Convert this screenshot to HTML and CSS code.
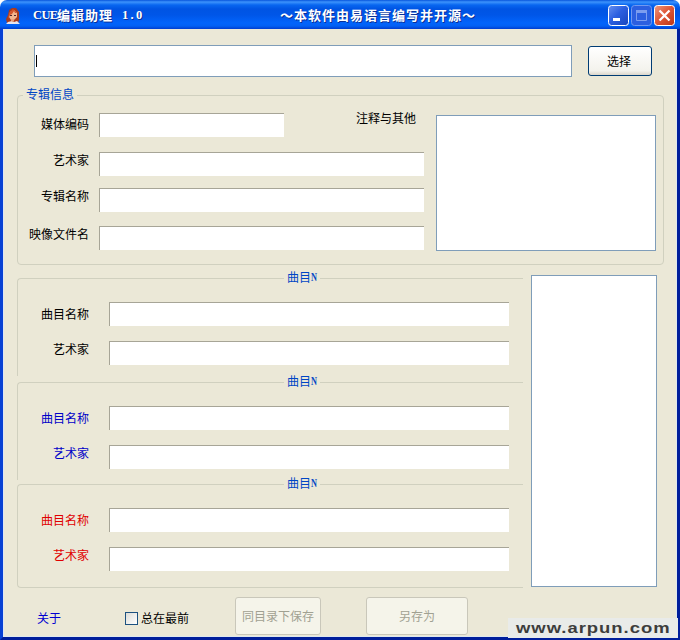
FILE: index.html
```html
<!DOCTYPE html>
<html lang="zh-CN">
<head>
<meta charset="utf-8">
<title>CUE编辑助理 1.0</title>
<link rel="stylesheet" href="styles.css">
</head>
<body>
<div class="window">
  <header class="titlebar">
    <svg class="app-icon" width="16" height="16" viewBox="0 0 16 16">
      <path d="M4 2L7 0h4l3 4v8l-1 3H2L1 11l2-4z" fill="#a83b1d"/>
      <path d="M5 4l4-2 3 3v4l-3 3H6L4 9z" fill="#f2b58d"/>
      <path d="M4 5l4-4 4 4-2 0-1-2-2 3-2 1-2 4z" fill="#d5542b"/>
      <path d="M5 7h2v1H5zM9 7h2v1H9z" fill="#55252a"/>
      <path d="M1 16l2-2 4-1 2 1 3-1 3 3z" fill="#e9e4ed"/>
      <path d="M6 11h3v2l-1 1-2-1z" fill="#e8a079"/>
    </svg>
    <h1 class="title"><span class="latin">CUE</span><span>编辑助理</span><span class="latin version">1.0</span></h1>
    <p class="slogan">～本软件由易语言编写并开源～</p>
    <div class="controls">
      <svg class="control" width="21" height="21" viewBox="0 0 21 21">
        <defs>
          <linearGradient id="blue" x1="0" y1="0" x2="1" y2="1"><stop offset="0" stop-color="#6690f0"/><stop offset=".45" stop-color="#2c5fe0"/><stop offset="1" stop-color="#1745bd"/></linearGradient>
          <linearGradient id="red" x1="0" y1="0" x2="1" y2="1"><stop offset="0" stop-color="#ee9a80"/><stop offset=".45" stop-color="#e0593a"/><stop offset="1" stop-color="#bd3515"/></linearGradient>
        </defs>
        <rect x=".5" y=".5" width="20" height="20" rx="3" fill="url(#blue)" stroke="#fff"/>
        <path d="M5 13h7v3H5z" fill="#fff"/>
      </svg>
      <svg class="control" width="21" height="21" viewBox="0 0 21 21">
        <rect x=".5" y=".5" width="20" height="20" rx="3" fill="#2c5fe0" stroke="#7198f0"/>
        <path d="M5.500 6.500h10v9h-10z" fill="none" stroke="#7c9def"/>
        <path d="M5 5h11v3H5z" fill="#7c9def"/>
      </svg>
      <svg class="control" width="21" height="21" viewBox="0 0 21 21">
        <rect x=".5" y=".5" width="20" height="20" rx="3" fill="url(#red)" stroke="#fff"/>
        <path d="M5.500 5.500l10 10M15.500 5.500l-10 10" stroke="#fff" stroke-width="2.300"/>
      </svg>
    </div>
  </header>

  <main class="client">
    <div class="open-row">
      <div class="path-box"><span class="caret"></span></div>
      <button class="button choose">选择</button>
    </div>

    <section class="group album">
      <div class="legend"><span>专辑信息</span></div>
      <div class="album-body">
        <div class="fields">
          <div class="field code"><label>媒体编码</label><div class="input"></div></div>
          <div class="field artist"><label>艺术家</label><div class="input"></div></div>
          <div class="field name"><label>专辑名称</label><div class="input"></div></div>
          <div class="field file"><label>映像文件名</label><div class="input"></div></div>
        </div>
        <div class="note-label">注释与其他</div>
        <div class="notes"></div>
      </div>
    </section>

    <div class="lower">
      <div class="tracks">
        <section class="group track first">
          <div class="legend"><span>曲目<b>N</b></span></div>
          <div class="field"><label>曲目名称</label><div class="input"></div></div>
          <div class="field"><label>艺术家</label><div class="input"></div></div>
        </section>
        <section class="group track second">
          <div class="legend"><span>曲目<b>N</b></span></div>
          <div class="field"><label>曲目名称</label><div class="input"></div></div>
          <div class="field"><label>艺术家</label><div class="input"></div></div>
        </section>
        <section class="group track third">
          <div class="legend"><span>曲目<b>N</b></span></div>
          <div class="field"><label>曲目名称</label><div class="input"></div></div>
          <div class="field"><label>艺术家</label><div class="input"></div></div>
        </section>
      </div>
      <div class="list"></div>
    </div>

    <footer class="footer">
      <a class="about">关于</a>
      <label class="on-top"><span class="check"></span>总在最前</label>
      <button class="button save" disabled>同目录下保存</button>
      <button class="button save-as" disabled>另存为</button>
    </footer>
  </main>
  <div class="watermark"><span>www.arpun.com</span></div>
</div>
</body>
</html>
```
FILE: styles.css
```css
* { box-sizing: border-box; }

body {
  margin: 0;
  background: #fff;
  font: 12px/16px "Noto Sans CJK SC", sans-serif;
  color: #000;
}

.window {
  position: relative;
  display: flex;
  flex-direction: column;
  width: 680px;
  height: 640px;
  overflow: hidden;
}

.titlebar {
  display: flex;
  align-items: center;
  height: 29px;
  padding: 2px 5px 0 5px;
  border-radius: 7px 7px 0 0;
  background: linear-gradient(#0755dc 0, #3c93fc 2px, #0866f0 5px, #0054e3 9px, #0056e8 15px, #0264fb 23px, #0260f4 26px, #003dcf 29px);
  color: #fff;
  text-shadow: 1px 1px 0 #0a2f96;
}

.app-icon { flex: none; }

.title, .slogan {
  display: flex;
  margin: 0 0 2px;
  font-size: 13px;
  font-weight: bold;
  letter-spacing: 1px;
  line-height: 20px;
  white-space: nowrap;
}

.title { width: 247px; margin-left: 12px; }
.latin { width: 24px; font-family: "Liberation Serif", serif; font-size: 12.5px; letter-spacing: -0.6px; }
.version { margin-left: 9px; letter-spacing: 2.3px; }
.slogan { flex: 1; }
.controls { display: flex; gap: 2px; }
.control { display: block; }

.client {
  flex: 1;
  border: solid #001e9b;
  border-width: 0 3px 3px;
  border-left-color: #0841d4;
  background: #ebe8d7;
  box-shadow: inset 1px 0 #dfe6f4, inset -1px -1px #dfe8ee;
}

.open-row {
  display: flex;
  align-items: center;
  gap: 16px;
  padding: 16px 0 0 31px;
}

.path-box {
  display: flex;
  align-items: center;
  width: 538px;
  height: 32px;
  padding-left: 1px;
  border: 1px solid #7f9db9;
  background: #fff;
}

.caret { width: 1px; height: 12px; background: #000; }

.button {
  padding: 0;
  border: 1px solid #003c74;
  border-radius: 3px;
  background: linear-gradient(#fff, #f3f2ec 85%, #dcd6cb);
  font: inherit;
  color: #000;
}

.choose { width: 64px; height: 30px; padding-right: 2px; }

.group {
  border: 1px solid #d0d0bf;
  border-radius: 4px;
}

.legend {
  display: flex;
  height: 0;
  align-items: center;
  color: #0046c5;
}

.legend span {
  display: flex;
  height: 18px;
  margin-bottom: 2px;
  padding: 0 3px;
  background: #ebe8d7;
  white-space: nowrap;
}

.legend b {
  width: 6px;
  font: bold 11.5px/17px "Liberation Serif", serif;
  transform: scaleX(.72);
  transform-origin: left;
}

.album { width: 647px; height: 170px; margin: 18px 0 0 14px; }
.album .legend { padding-left: 5px; }
.album-body { display: flex; }
.fields { width: 406px; padding-top: 17px; }

.field { display: flex; align-items: center; height: 24px; }
.field label { flex: none; width: 71px; text-align: right; white-space: nowrap; }

.input {
  height: 24px;
  border: solid #a7a597;
  border-width: 1px 0 0 1px;
  background: #fff;
}

.field .input { width: 325px; margin-left: 10px; }
.field.code .input { width: 185px; }
.code label { padding-bottom: 2px; }
.artist { margin-top: 15px; }
.name { margin-top: 12px; }
.file { margin-top: 14px; }
.artist label, .name label, .file label { padding-bottom: 9px; }

.note-label { width: 62px; margin: 14px 0 0 -68px; white-space: nowrap; }
.notes { width: 220px; height: 136px; margin: 19px 0 0 18px; border: 1px solid #7f9db9; background: #fff; }

.lower { display: flex; gap: 8px; height: 312px; margin: 10px 0 0 14px; }
.tracks { width: 506px; padding-top: 3px; }
.track { height: 98px; border-right: 0; border-bottom: 0; border-radius: 4px 0 0 0; }
.track .legend { padding-left: 266px; }
.track .input { width: 400px; margin-left: 20px; }
.track .legend + .field { margin-top: 23px; }
.track .field + .field { margin-top: 15px; }
.track .field + .field label { padding-bottom: 9px; }
.second { margin-top: 6px; }
.second label { color: #0000c8; }
.third { height: 104px; margin-top: 4px; border-bottom: 1px solid #d0d0bf; border-radius: 4px 0 0 4px; }
.third label { color: #e00000; }

.list { width: 126px; height: 312px; border: 1px solid #7f9db9; background: #fff; }

.footer { display: flex; align-items: center; height: 38px; margin-top: 10px; padding: 0 0 0 34px; }
.about { width: 88px; padding-top: 3px; color: #0000d0; }
.on-top { display: flex; align-items: center; gap: 3px; width: 110px; padding-top: 4px; }
.check { width: 13px; height: 13px; border: 1px solid #1c5180; background: linear-gradient(135deg, #dcdcd7, #fff); }

.save, .save-as {
  height: 38px;
  border-color: #c9c7ba;
  background: #f5f4ea;
  color: #a1a192;
}

.save { width: 86px; }
.save-as { width: 102px; margin-left: 45px; }

.watermark {
  position: absolute;
  left: 508px;
  top: 618px;
  display: flex;
  align-items: center;
  width: 170px;
  height: 20px;
  padding-left: 8px;
  background: #e9ebe9;
  color: #3d3d3d;
  font: bold 15px/20px "Liberation Sans", sans-serif;
  letter-spacing: 0.8px;
}

.watermark span { transform: scaleX(1.23); transform-origin: left; }
```
